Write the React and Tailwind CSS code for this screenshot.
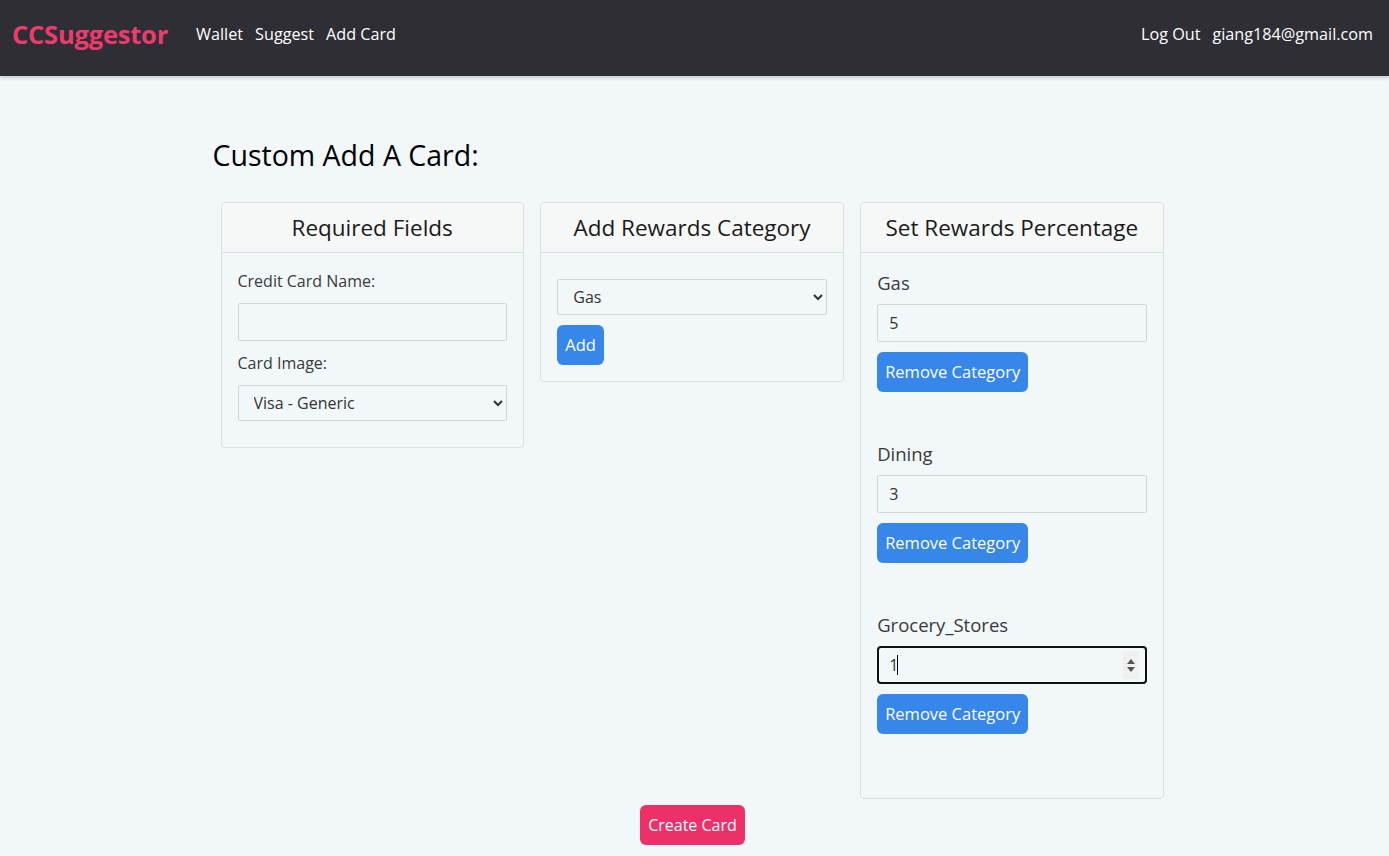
import { useState } from "react";

const FONT = { fontFamily: '"Open Sans", "Liberation Sans", sans-serif' };

const NAV_LINKS = ["Wallet", "Suggest", "Add Card"];

const REWARDS = [
  { name: "Gas", value: "5" },
  { name: "Dining", value: "3" },
  { name: "Grocery_Stores", value: "1", focused: true },
];

function CardShell({ title, children, bodyClass = "" }) {
  return (
    <div className="flex flex-col rounded-[4px] border border-[#dcdfe2] bg-[#f2f7f9]">
      <div className="flex h-[50px] items-center justify-center rounded-t-[4px] border-b border-[#dcdfe2] bg-[#f6f7f7] text-[22.5px] text-[#1b1b1b]">
        {title}
      </div>
      <div className={`px-4 ${bodyClass}`}>{children}</div>
    </div>
  );
}

function BlueButton({ children }) {
  return (
    <button
      type="button"
      className="h-10 rounded-[6px] bg-[#3787ea] px-[8px] text-[16.5px] text-white"
    >
      {children}
    </button>
  );
}

function Spinner() {
  return (
    <div className="absolute right-[8px] top-1/2 flex h-[28px] w-[16px] -translate-y-1/2 flex-col items-center justify-center gap-[3px] bg-[#f0f0f0]">
      <svg width="8" height="5" viewBox="0 0 8 5">
        <path d="M0 5 L4 0 L8 5 Z" fill="#555" />
      </svg>
      <svg width="8" height="5" viewBox="0 0 8 5">
        <path d="M0 0 L4 5 L8 0 Z" fill="#555" />
      </svg>
    </div>
  );
}

export default function App() {
  const [cardName, setCardName] = useState("");

  return (
    <div className="min-h-[900px] bg-[#f2f7f9]" style={FONT}>
      <nav className="flex h-[76px] items-center justify-between bg-[#2f2e35] pb-2 pl-3 pr-4 shadow-[0_2px_4px_rgba(0,0,0,0.18)]">
        <div className="flex items-center">
          <span className="mr-[28px] text-[25.5px] font-bold tracking-[-0.2px] text-[#ec3b6d]">
            CCSuggestor
          </span>
          <div className="flex items-center gap-3 text-[16.2px] font-medium text-white">
            {NAV_LINKS.map((link) => (
              <a key={link} href="#">
                {link}
              </a>
            ))}
          </div>
        </div>
        <div className="flex items-center gap-3 text-[16.2px] font-medium text-white">
          <a href="#">Log Out</a>
          <span>giang184@gmail.com</span>
        </div>
      </nav>

      <main className="mx-auto w-[964px] pt-[62px]">
        <h1 className="text-[28.5px] font-medium leading-[34px] text-black">
          Custom Add A Card:
        </h1>

        <div className="ml-[8px] mt-[30px] grid w-[943px] grid-cols-3 items-start gap-x-[16.5px]">
          <CardShell title="Required Fields" bodyClass="pt-[16px] pb-[26px]">
            <label className="block text-[16px] leading-6 text-[#3a3a3a]">
              Credit Card Name:
            </label>
            <input
              type="text"
              value={cardName}
              onChange={(event) => setCardName(event.target.value)}
              className="mt-[10px] block h-[38px] w-full rounded-[2px] border border-[#d3d7da] bg-[#f2f7f9] px-3 text-[16px] text-[#333] outline-none"
            />
            <label className="mt-[10px] block text-[16px] leading-6 text-[#3a3a3a]">
              Card Image:
            </label>
            <select className="mt-[10px] block h-[36px] w-full rounded-[2px] border border-[#d3d7da] bg-[#f2f7f9] px-[11px] text-[16px] text-[#333]">
              <option>Visa - Generic</option>
              <option>Mastercard - Generic</option>
            </select>
          </CardShell>

          <CardShell title="Add Rewards Category" bodyClass="pt-[26px] pb-[16px]">
            <select className="block h-[36px] w-full rounded-[2px] border border-[#d3d7da] bg-[#f2f7f9] px-[11px] text-[16px] text-[#333]">
              <option>Gas</option>
              <option>Dining</option>
              <option>Grocery_Stores</option>
            </select>
            <div className="mt-[10px]">
              <BlueButton>Add</BlueButton>
            </div>
          </CardShell>

          <CardShell title="Set Rewards Percentage" bodyClass="pt-[18px] pb-[64px]">
            <div className="flex flex-col gap-[50px]">
              {REWARDS.map((reward) => (
                <div key={reward.name}>
                  <div className="text-[18.5px] leading-6 text-[#3a3a3a]">
                    {reward.name}
                  </div>
                  <div className="relative mt-[9px]">
                    <input
                      type="text"
                      readOnly
                      value={reward.value}
                      className={`block h-[38px] w-full bg-[#f2f7f9] text-[16px] text-[#333] outline-none ${
                        reward.focused
                          ? "rounded-[4px] border-2 border-[#111] px-[10px]"
                          : "rounded-[2px] border border-[#d3d7da] px-[11px]"
                      }`}
                    />
                    {reward.focused ? (
                      <>
                        <span className="absolute left-[20px] top-[9px] h-[20px] w-px bg-black" />
                        <Spinner />
                      </>
                    ) : null}
                  </div>
                  <div className="mt-[10px]">
                    <BlueButton>Remove Category</BlueButton>
                  </div>
                </div>
              ))}
            </div>
          </CardShell>
        </div>

        <div className="mt-[6px] flex justify-center pr-[4px]">
          <button
            type="button"
            className="h-10 rounded-[6px] bg-[#ee3069] px-[8px] text-[16px] text-white"
          >
            Create Card
          </button>
        </div>
      </main>
    </div>
  );
}
